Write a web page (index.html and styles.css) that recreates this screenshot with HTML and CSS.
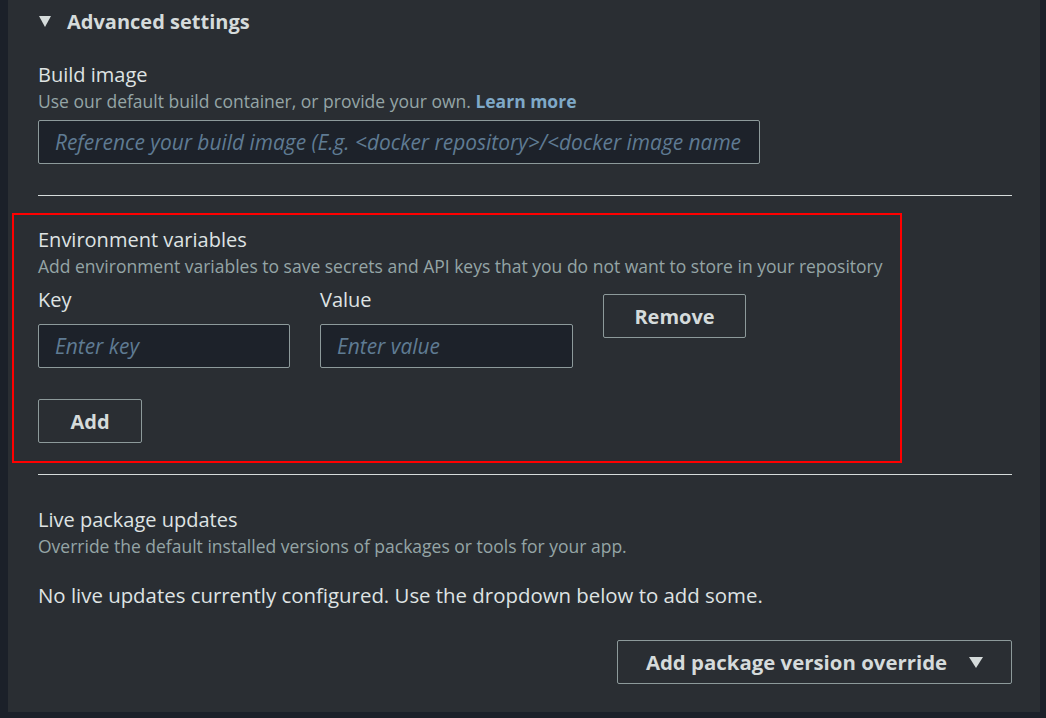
FILE: index.html
```html
<!DOCTYPE html>
<html>
<head>
<meta charset="utf-8">
<link rel="stylesheet" href="styles.css">
</head>
<body>
<div class="panel">
  <div class="expander">
    <span class="caret"></span>
    <span class="expander-title">Advanced settings</span>
  </div>

  <section class="field build">
    <div class="label">Build image</div>
    <div class="desc">Use our default build container, or provide your own. <a class="link" href="#">Learn more</a></div>
    <div class="input wide"><span class="ph">Reference your build image (E.g. &lt;docker repository&gt;/&lt;docker image name</span></div>
  </section>

  <hr class="divider">

  <section class="env">
    <div class="label">Environment variables</div>
    <div class="desc">Add environment variables to save secrets and API keys that you do not want to store in your repository</div>
    <div class="kv-row">
      <div class="kv-col">
        <div class="label">Key</div>
        <div class="input"><span class="ph">Enter key</span></div>
      </div>
      <div class="kv-col">
        <div class="label">Value</div>
        <div class="input"><span class="ph">Enter value</span></div>
      </div>
      <button class="btn remove">Remove</button>
    </div>
    <button class="btn add">Add</button>
  </section>

  <hr class="divider second">

  <section class="field live">
    <div class="label">Live package updates</div>
    <div class="desc">Override the default installed versions of packages or tools for your app.</div>
    <p class="empty">No live updates currently configured. Use the dropdown below to add some.</p>
    <div class="actions">
      <button class="btn dropdown">Add package version override <span class="caret small"></span></button>
    </div>
  </section>
</div>
</body>
</html>
```

FILE: styles.css
```css
* { box-sizing: border-box; }

html, body {
  margin: 0;
  padding: 0;
  background: #1b2029;
  width: 1046px;
  height: 718px;
  overflow: hidden;
}

body {
  font-family: "Open Sans", "Noto Sans", "Liberation Sans", sans-serif;
  color: #d5dbdb;
}

.panel {
  margin-left: 8px;
  width: 1032px;
  height: 712px;
  background: #2a2e33;
  padding: 0 28px 0 30px;
}

.expander {
  height: 42px;
  display: flex;
  align-items: center;
  padding-left: 1px;
}

.caret {
  width: 0;
  height: 0;
  border-left: 6px solid transparent;
  border-right: 6px solid transparent;
  border-top: 11px solid #d5dbdb;
  margin-right: 16px;
}

.expander-title {
  font-size: 20px;
  font-weight: 700;
  color: #d5dbdb;
}

.label {
  font-size: 20px;
  line-height: 24px;
  color: #dfe3e3;
}

.desc {
  font-size: 17.5px;
  line-height: 20px;
  color: #95a5a6;
  margin-top: 4px;
  white-space: nowrap;
}

.link {
  color: #7fa9c8;
  font-weight: 700;
  text-decoration: none;
}

.build {
  padding-top: 21px;
}

.input {
  height: 44px;
  border: 1px solid #8d9a9b;
  border-radius: 2px;
  background: #1d222a;
  display: flex;
  align-items: center;
  padding-left: 16px;
  overflow: hidden;
  white-space: nowrap;
}

.input.wide {
  width: 722px;
  margin-top: 9px;
}

.ph {
  font-style: italic;
  font-size: 20.9px;
  color: #5f7b93;
}

.divider {
  border: 0;
  border-top: 1px solid #d5dbdb;
  margin: 31px 0 0 0;
  height: 0;
}

.divider.second {
  margin-top: 11px;
}

.env {
  margin-top: 17px;
  margin-left: -26px;
  width: 890px;
  border: 2px solid #ff0000;
  padding: 13px 0 18px 24px;
}

.kv-row {
  display: flex;
  gap: 30px;
  margin-top: 12px;
}

.kv-col {
  width: 252px;
}

.kv-col + .kv-col {
  width: 253px;
}

.kv-col .input {
  margin-top: 12px;
}

.btn {
  font-family: inherit;
  font-size: 20px;
  font-weight: 700;
  color: #d5dbdb;
  background: transparent;
  border: 1px solid #8d9a9b;
  border-radius: 2px;
  height: 44px;
  padding: 0;
  cursor: pointer;
}

.remove {
  width: 143px;
  margin-top: 6px;
}

.add {
  width: 104px;
  margin-top: 31px;
  display: block;
}

.live {
  padding-top: 33px;
}

.empty {
  margin: 25px 0 0 0;
  font-size: 20.4px;
  line-height: 28px;
  color: #dfe3e3;
}

.actions {
  display: flex;
  justify-content: flex-end;
  margin-top: 31px;
}

.dropdown {
  width: 395px;
  display: flex;
  align-items: center;
  justify-content: center;
  font-size: 20.4px;
}

.caret.small {
  border-left-width: 7px;
  border-right-width: 7px;
  border-top-width: 11px;
  margin: 0 0 0 22px;
}
```
